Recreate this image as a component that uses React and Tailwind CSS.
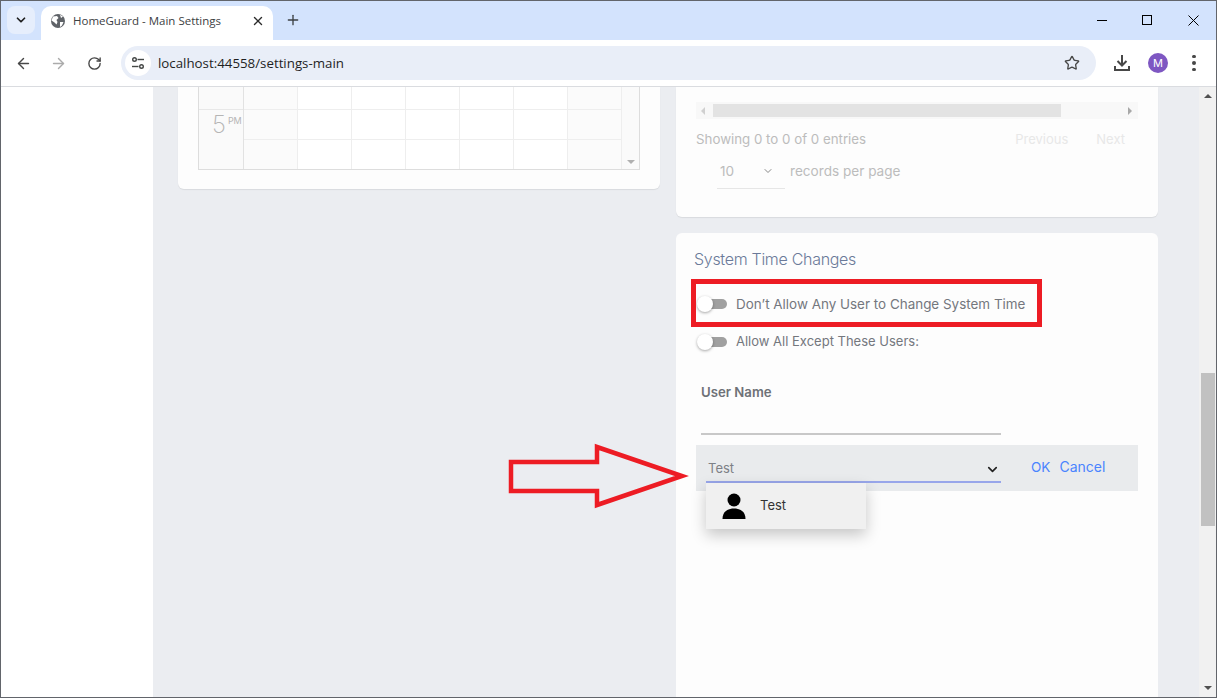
import React from "react";
import { ArrowLeft, ArrowRight, RotateCw, Star, X, Plus, ChevronDown } from "lucide-react";

const days = [0, 1, 2, 3, 4, 5, 6];

function CalendarRow({ h }) {
  return (
    <div className={"flex border-b border-[#eeeeee] " + h}>
      {days.map((d) => (
        <div key={d} className={"w-[54px] border-r border-[#eeeeee] " + (d === 0 || d === 6 ? "bg-[#fbfbfb]" : "bg-white")} />
      ))}
    </div>
  );
}

function Toggle({ label, cls }) {
  return (
    <div className="flex items-center h-[18px]">
      <div className="relative w-[28px] h-[10px] ml-[3px] mr-[9px] bg-[#a0a0a0] rounded-full shrink-0">
        <div className="absolute -left-[2px] -top-[3px] w-[16px] h-[16px] rounded-full bg-white shadow-[0_1px_3px_rgba(0,0,0,0.35)]" />
      </div>
      <span className={"text-[#74777d] " + cls}>{label}</span>
    </div>
  );
}

export default function App() {
  return (
    <div className="w-[1217px] h-[698px] overflow-hidden flex flex-col border border-[#62656b] bg-white font-['Inter',sans-serif]">
      {/* Tab strip */}
      <div className="h-[39px] shrink-0 bg-[#d3e3fd] flex items-end relative font-['Open_Sans',sans-serif]">
        <div className="self-start mt-[5px] ml-[6px] w-[28px] h-[28px] rounded-[8px] bg-[#e6eefc] flex items-center justify-center">
          <ChevronDown size={14} strokeWidth={3} className="text-[#1f1f1f]" />
        </div>
        <div className="ml-[6px] w-[232px] h-[34px] bg-white rounded-t-[10px] flex items-center pl-[9px] pr-[8px] pb-[4px]">
          <svg width="16" height="16" viewBox="0 0 16 16" className="shrink-0">
            <circle cx="8" cy="8" r="7" fill="#5f6368" />
            <path d="M3 3.5 L7 3 L8.5 5 L6.5 7 L7.5 9 L6.5 11.5 L4.5 9.5 L1.5 7.5 Z M10 9 L13.5 9 L12 12.5 L10 14 Z M10 1.8 L13 3.5 L11 5 Z" fill="#ffffff" />
          </svg>
          <span className="ml-[7px] text-[11.5px] text-[#3c4043] whitespace-nowrap flex-1">HomeGuard - Main Settings</span>
          <X size={14} strokeWidth={2.4} className="text-[#2b2b2b]" />
        </div>
        <Plus size={16} strokeWidth={2} className="self-start mt-[11px] ml-[12px] text-[#3c4043]" />
        <div className="ml-auto self-start h-[38px] flex items-center text-[#111]">
          <div className="w-[46px] flex justify-center">
            <div className="w-[10px] h-[1px] ml-[2px] bg-black" />
          </div>
          <div className="w-[46px] flex justify-center">
            <div className="w-[10px] h-[10px] border border-black" />
          </div>
          <div className="w-[46px] flex justify-center">
            <svg width="11" height="11" viewBox="0 0 11 11"><path d="M0.5 0.5 L10.5 10.5 M10.5 0.5 L0.5 10.5" stroke="#000" strokeWidth="1" /></svg>
          </div>
        </div>
      </div>
      {/* Toolbar */}
      <div className="h-[47px] shrink-0 bg-white border-b border-[#dadce0] rounded-tr-[8px] flex items-center pl-[14px] pr-[11px]">
        <ArrowLeft size={17} strokeWidth={2} className="text-[#474747]" />
        <ArrowRight size={17} strokeWidth={2} className="text-[#ababab] ml-[18px]" />
        <RotateCw size={15} strokeWidth={2.2} className="text-[#474747] ml-[20px]" />
        <div className="ml-[19px] w-[975px] h-[34px] rounded-full bg-[#e9eef8] flex items-center pl-[4px] pr-[16px]">
          <div className="w-[26px] h-[26px] rounded-full bg-white flex items-center justify-center">
            <svg width="16" height="16" viewBox="0 0 16 16" fill="none" stroke="#444746" strokeWidth="1.4">
              <circle cx="4.5" cy="4.5" r="1.8" />
              <path d="M7.5 4.5 H14" />
              <circle cx="11.5" cy="11.5" r="1.8" />
              <path d="M2 11.5 H8.5" />
            </svg>
          </div>
          <span className="ml-[7px] mt-[1px] text-[13.3px] text-[#1f1f1f] font-['Open_Sans',sans-serif] flex-1">localhost:44558/settings-main</span>
          <Star size={16} strokeWidth={2} className="text-[#474747]" />
        </div>
        <svg width="18" height="18" viewBox="0 0 18 18" className="ml-[17px]" fill="none" stroke="#474747" strokeWidth="2">
          <path d="M9 1 V11 M4.5 7 L9 11.5 L13.5 7 M2 12 V16 H16 V12" />
        </svg>
        <div className="ml-[17px] w-[20px] h-[20px] rounded-full bg-[#7e57c2] text-white text-[11px] flex items-center justify-center">M</div>
        <div className="ml-[24px] flex flex-col gap-[3px]">
          <div className="w-[3.5px] h-[3.5px] rounded-full bg-[#474747]" />
          <div className="w-[3.5px] h-[3.5px] rounded-full bg-[#474747]" />
          <div className="w-[3.5px] h-[3.5px] rounded-full bg-[#474747]" />
        </div>
      </div>
      {/* Page */}
      <div className="flex-1 min-h-0 flex relative">
        <div className="w-[152px] shrink-0 bg-white" />
        <div className="w-[1046px] bg-[#ebedf1] pl-[25px] flex gap-[16px] items-start overflow-hidden">
          {/* left card */}
          <div className="w-[482px] h-[102px] bg-[#fdfdfd] rounded-b-[6px] shadow-[0_1px_1px_rgba(0,0,0,0.08)] px-[20px] shrink-0">
            <div className="w-[442px] h-[83px] flex border-b border-r border-l border-[#dddddd]">
              <div className="w-[45px] shrink-0 bg-[#fafafa] border-r border-[#e2e2e2]">
                <div className="h-[23px] border-b border-[#e8e8e8]" />
                <div className="pl-[13px] flex items-start text-[#b5b5b5] leading-none">
                  <span className="text-[24px] font-extralight mt-[3px]">5</span>
                  <span className="text-[9px] ml-[2px] mt-[6px]">PM</span>
                </div>
              </div>
              <div className="w-[378px] shrink-0">
                <CalendarRow h="h-[23px]" />
                <CalendarRow h="h-[30px]" />
                <CalendarRow h="h-[29px] border-b-0" />
              </div>
              <div className="flex-1 bg-[#fafafa] flex items-end justify-center pb-[5px]">
                <div className="w-0 h-0 border-l-[4px] border-r-[4px] border-t-[4px] border-l-transparent border-r-transparent border-t-[#b0b0b0]" />
              </div>
            </div>
          </div>
          {/* right column */}
          <div className="w-[482px] shrink-0 flex flex-col gap-[16px]">
            <div className="h-[130px] bg-[#fdfdfd] rounded-b-[6px] shadow-[0_1px_1px_rgba(0,0,0,0.08)] px-[20px] pt-[15px]">
              <div className="h-[17px] bg-[#f8f8f8] flex items-center">
                <div className="w-0 h-0 ml-[5px] border-t-[4px] border-b-[4px] border-r-[4px] border-t-transparent border-b-transparent border-r-[#d0d0d0]" />
                <div className="ml-[8px] w-[348px] h-[13px] bg-[#e3e3e3]" />
                <div className="w-0 h-0 ml-auto mr-[6px] border-t-[4px] border-b-[4px] border-l-[4px] border-t-transparent border-b-transparent border-l-[#a8a8a8]" />
              </div>
              <div className="flex items-center mt-[12px] h-[18px] text-[13.3px] text-[#bcbcbc]">
                <span>Showing 0 to 0 of 0 entries</span>
                <span className="ml-auto text-[13px] text-[#e8e8e8]">Previous</span>
                <span className="ml-[28px] mr-[13px] text-[13px] text-[#e8e8e8]">Next</span>
              </div>
              <div className="flex items-start mt-[9px] text-[13.6px] text-[#bcbcbc]">
                <div className="ml-[21px] w-[68px] h-[31px] border-b border-[#e6e6e6] flex items-start pt-[4px] pl-[3px] pr-[11px]">
                  <span className="flex-1 leading-[18px]">10</span>
                  <ChevronDown size={12} strokeWidth={2} className="text-[#888] mt-[3px]" />
                </div>
                <span className="ml-[5px] mt-[4px] leading-[18px]">records per page</span>
              </div>
            </div>
            <div className="h-[480px] bg-[#fdfdfd] rounded-t-[6px] px-[20px] pt-[16px]">
              <h3 className="-ml-[2px] text-[16px] leading-[20px] font-light tracking-[-0.3px] text-[#6b7a99]">System Time Changes</h3>
              <div className="mt-[26px] flex flex-col gap-[20px]">
                <Toggle label="Don’t Allow Any User to Change System Time" cls="text-[13.45px]" />
                <Toggle label="Allow All Except These Users:" cls="text-[13px]" />
              </div>
              <div className="ml-[5px] mt-[33px] w-[300px]">
                <div className="text-[13.2px] font-semibold text-[#6e7177] leading-[16px]">User Name</div>
                <div className="mt-[33px] h-[2px] bg-[#c8c8c8]" />
              </div>
              <div className="mt-[10px] h-[46px] bg-[#e9ebed] flex items-start relative">
                <div className="ml-[10px] w-[295px] h-[38px] border-b-2 border-[#98a6ea] flex items-end pb-[4px] pl-[2px] pr-[1px]">
                  <span className="flex-1 text-[13px] text-[#7d8086] leading-[18px]">Test</span>
                  <ChevronDown size={15} strokeWidth={2.6} className="text-[#222]" />
                </div>
                <div className="ml-[30px] mt-[13px] text-[13.5px] text-[#4a84ff] leading-[18px]">OK</div>
                <div className="ml-[9px] mt-[13px] text-[14px] text-[#4a84ff] leading-[18px]">Cancel</div>
                <div className="absolute left-[10px] top-[38px] w-[160px] h-[46px] bg-[#f0f0f0] shadow-[0_6px_14px_rgba(0,0,0,0.22)] flex items-center pl-[16px]">
                  <svg width="24" height="27" viewBox="0 0 24 27" fill="#000">
                    <circle cx="12" cy="7" r="6.5" />
                    <path d="M0.5 26 C0.5 19 5 15.5 12 15.5 C19 15.5 23.5 19 23.5 26 Z" />
                  </svg>
                  <span className="ml-[14px] text-[13px] text-[#333]">Test</span>
                </div>
              </div>
            </div>
          </div>
        </div>
        {/* page scrollbar */}
        <div className="flex-1 bg-[#f1f1f1] relative">
          <div className="absolute left-[5px] top-[7px] w-0 h-0 border-l-[4px] border-r-[4px] border-b-[4px] border-l-transparent border-r-transparent border-b-[#505050]" />
          <div className="absolute left-[2px] right-[1px] top-[286px] h-[153px] bg-[#c1c1c1]" />
          <div className="absolute left-[5px] bottom-[7px] w-0 h-0 border-l-[4px] border-r-[4px] border-t-[4px] border-l-transparent border-r-transparent border-t-[#505050]" />
        </div>
        {/* annotation overlays */}
        <svg className="absolute left-[-1px] top-[-86px] pointer-events-none" width="1217" height="698" fill="none" stroke="#ed1c24">
          <rect x="693.5" y="280.5" width="346" height="43" strokeWidth="5" />
          <path d="M511 461 H597 V446 L682 475 L597 504 V490 H511 Z" strokeWidth="4.5" />
        </svg>
      </div>
    </div>
  );
}
